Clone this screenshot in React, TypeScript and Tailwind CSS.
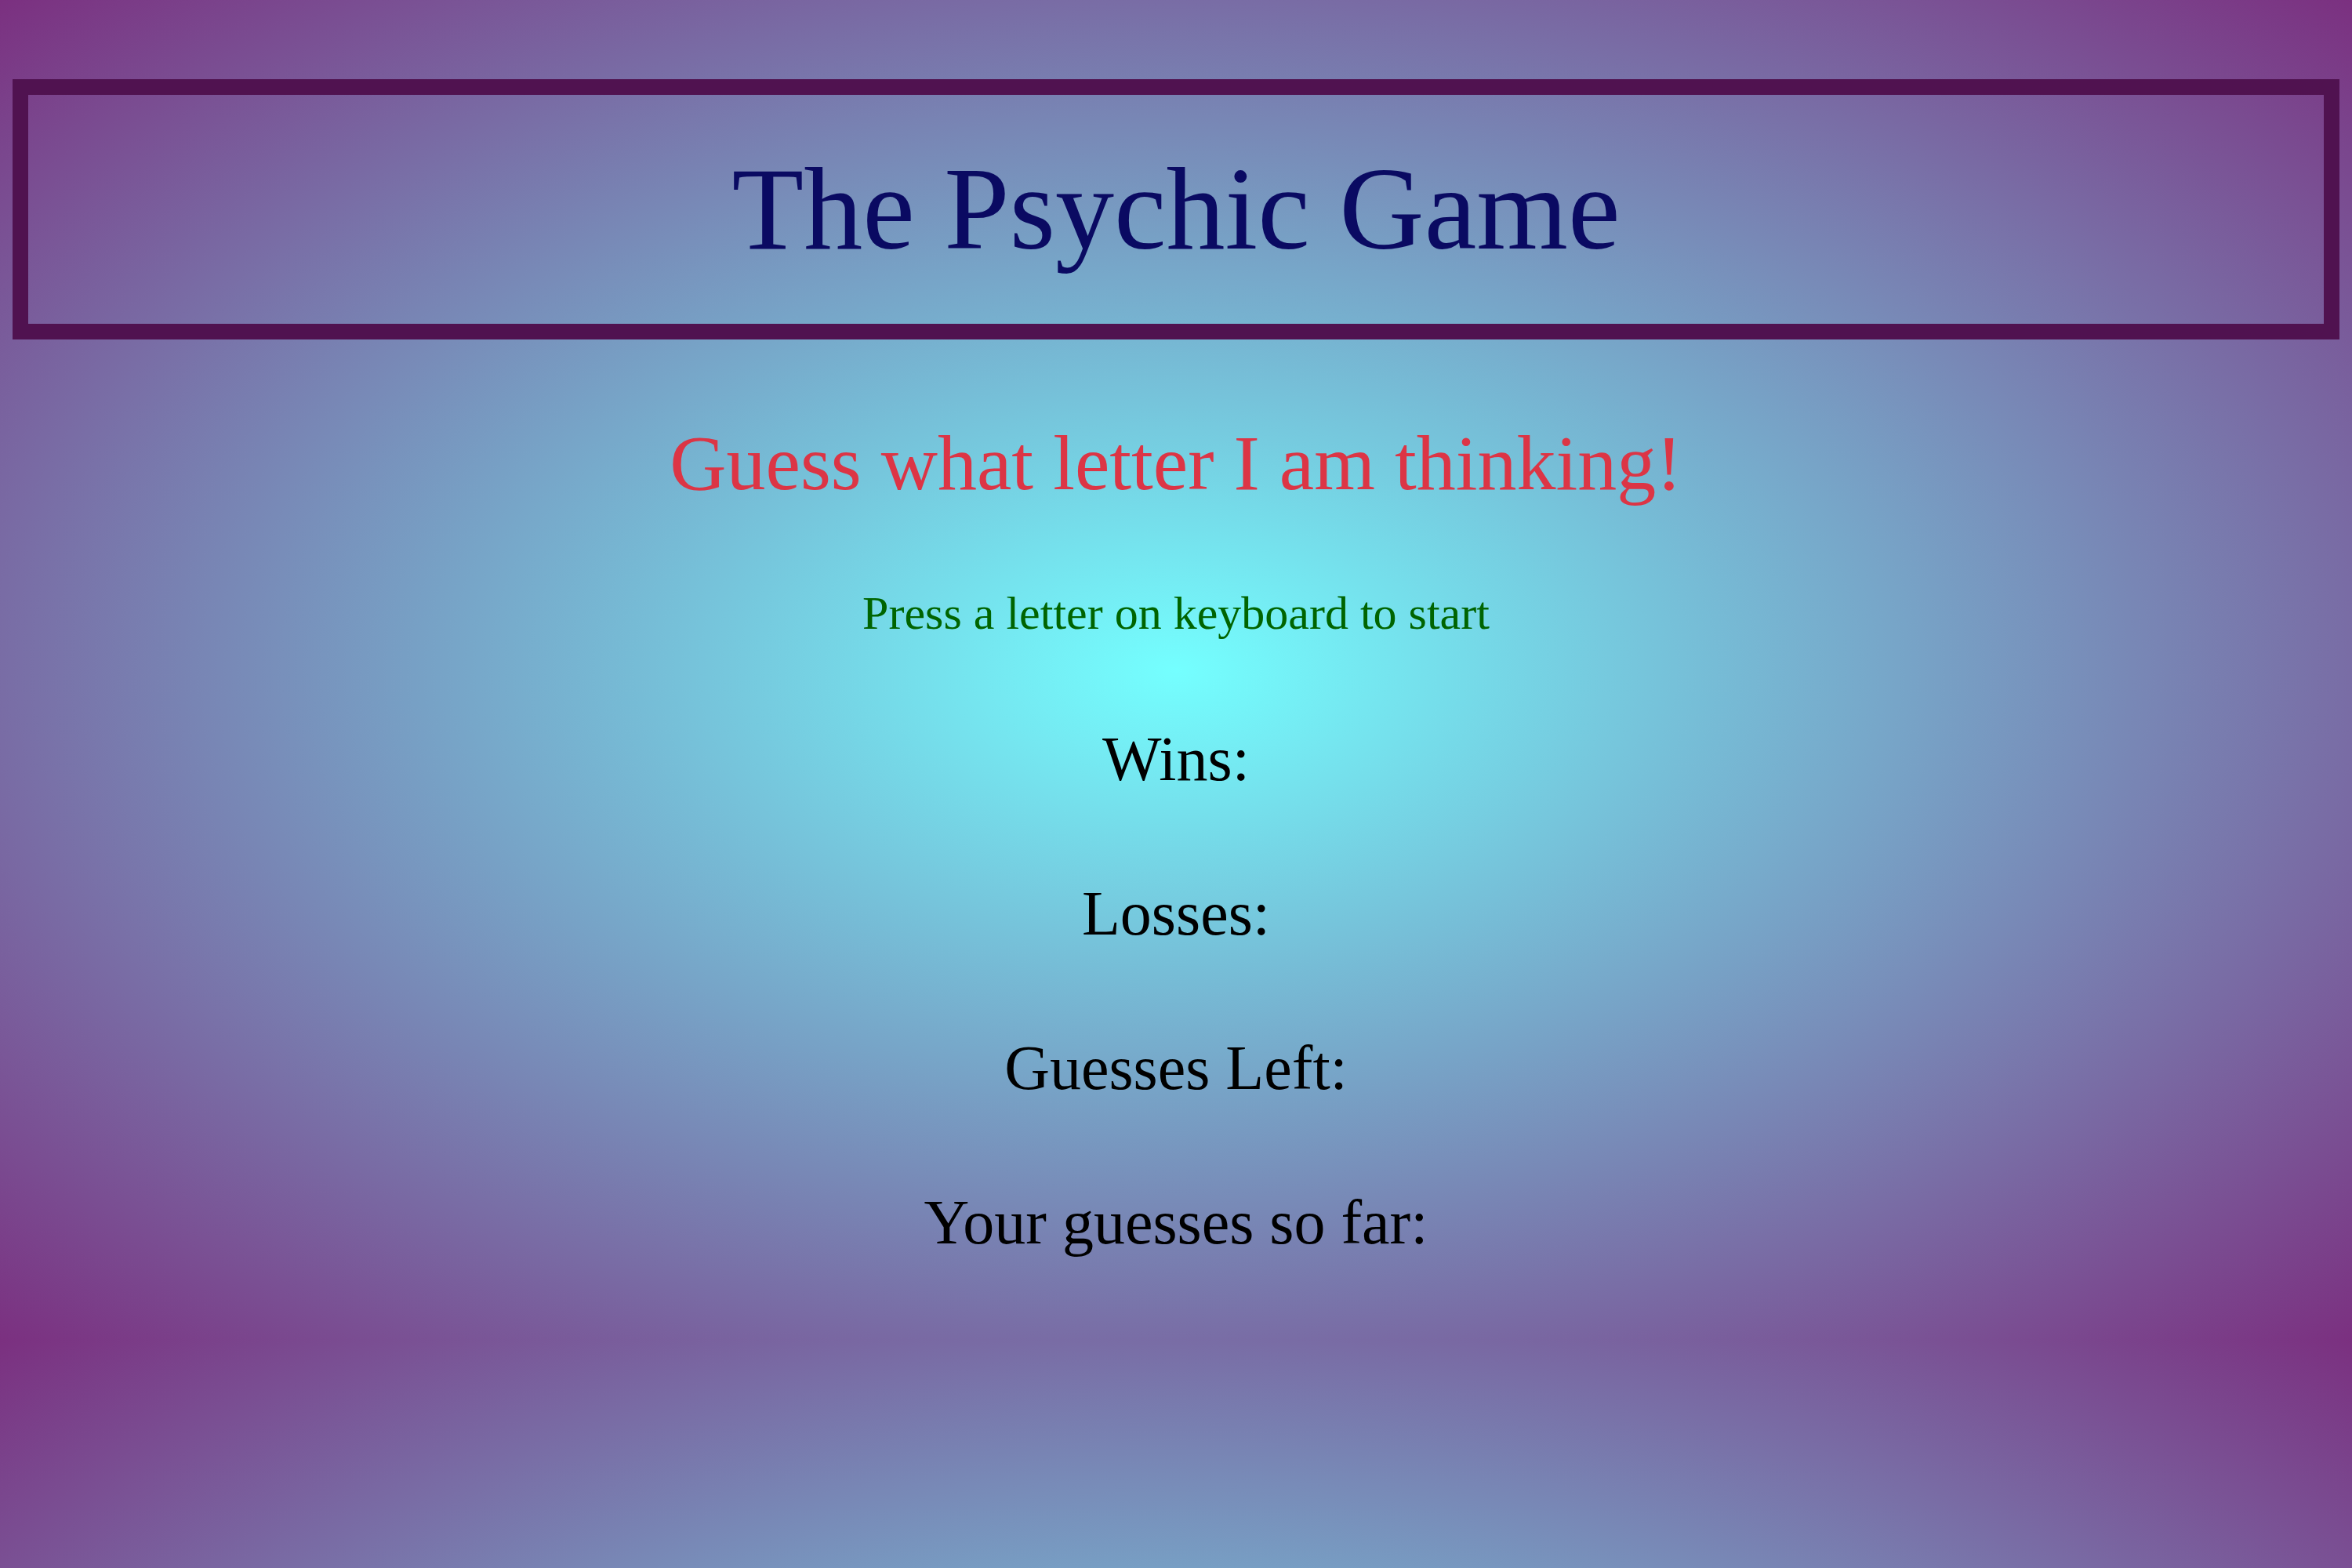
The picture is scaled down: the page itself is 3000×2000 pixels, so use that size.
const stats = ["Wins:", "Losses:", "Guesses Left:", "Your guesses so far:"];

export default function App() {
  return (
    <div className="min-h-screen bg-[radial-gradient(#74ffff,#7b3080)] bg-[length:100%_1710px] bg-repeat font-['Liberation_Serif','Times_New_Roman',serif] text-center pt-[101px]">
      <header className="mx-4 border-[20px] border-[#501250] pt-[60px] pb-[61px]">
        <h1 className="text-[150px] leading-[171px] text-[#0a0a62]">The Psychic Game</h1>
      </header>

      <h2 className="mt-[100px] text-[100px] leading-[115px] text-[#dc3545]">
        Guess what letter I am thinking!
      </h2>
      <p className="mt-[100px] text-[60px] leading-[69px] text-[#006400]">
        Press a letter on keyboard to start
      </p>

      <div className="flex flex-col gap-[105px] mt-[105px]">
        {stats.map((label) => (
          <p key={label} className="text-[80px] leading-[92px] text-black">
            {label}
          </p>
        ))}
      </div>
    </div>
  );
}
